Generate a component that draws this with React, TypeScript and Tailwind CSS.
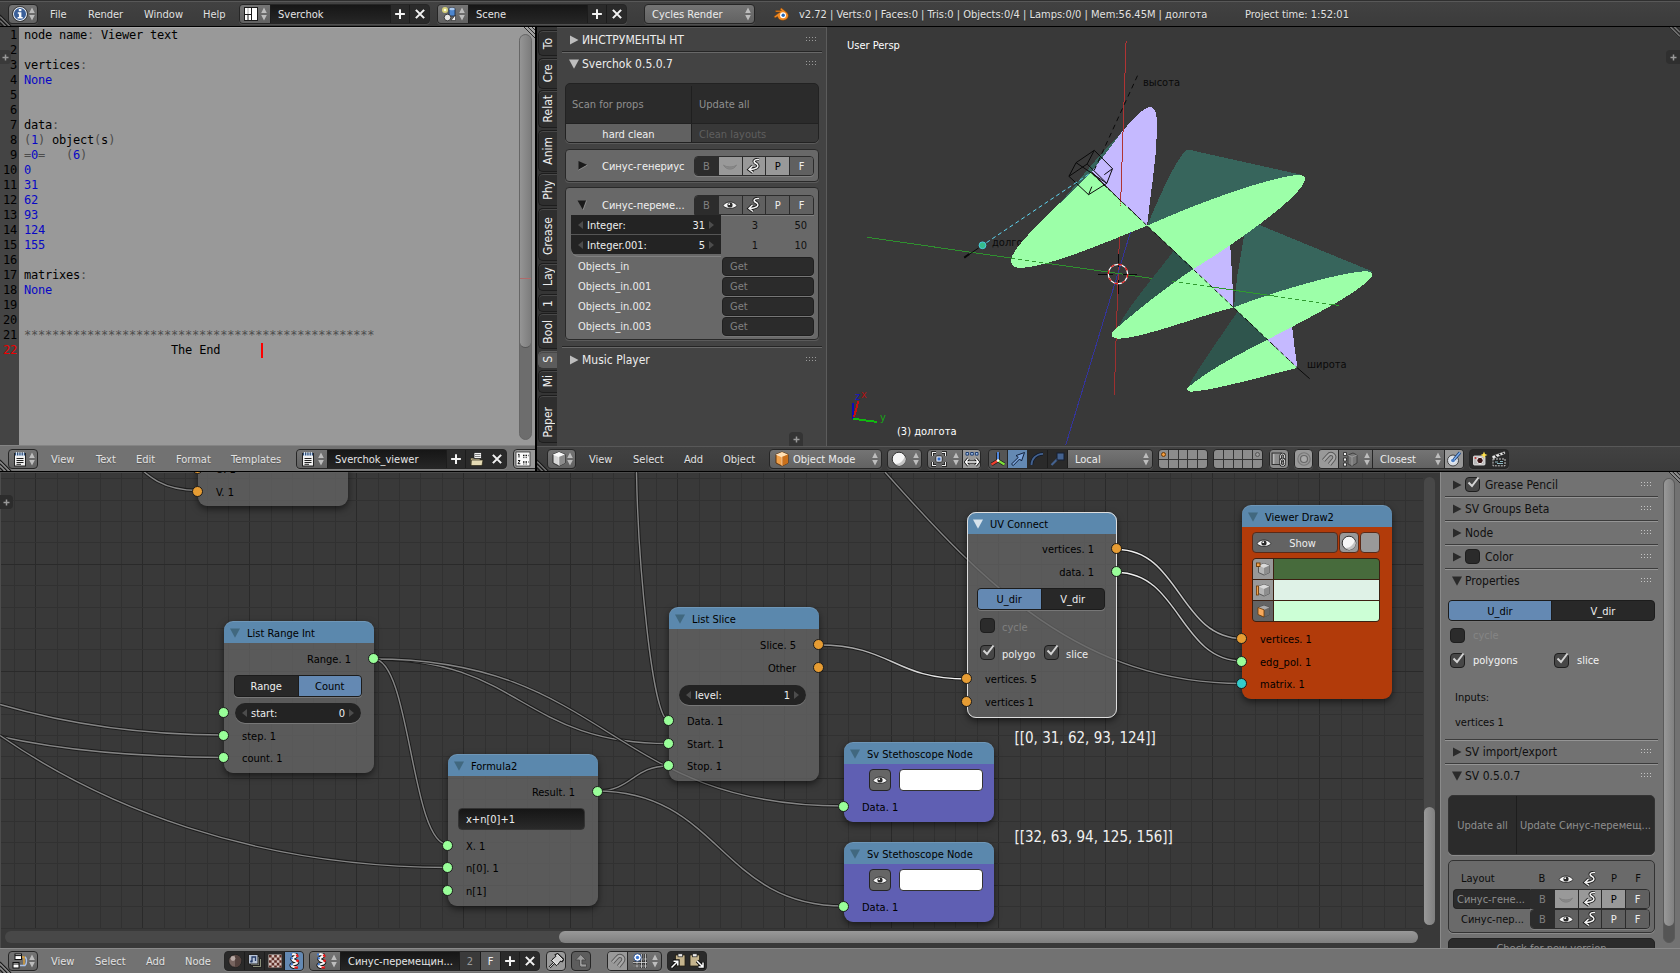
import React from "react";

type Kids = { children?: React.ReactNode };

/* ---------- icons ---------- */

const Svg = ({ children, s = 16, className = "" }: Kids & { s?: number; className?: string }) => (
  <svg width={s} height={s} viewBox="0 0 16 16" className={"shrink-0 " + className} fill="none">
    {children}
  </svg>
);

const UpDown = ({ className = "" }: { className?: string }) => (
  <svg width="6" height="14" viewBox="0 0 6 14" className={"shrink-0 " + className} fill="#bdbdbd">
    <path d="M3 0.5 5.8 6H0.2Z M0.2 8H5.8L3 13.5Z" />
  </svg>
);

const InfoIcon = () => (
  <Svg>
    <circle cx="8" cy="8" r="6.6" fill="#3a5f99" stroke="#e6ebf2" strokeWidth="1.1" />
    <circle cx="8" cy="8" r="7.5" stroke="#1c1c1c" strokeWidth="0.7" />
    <rect x="6.8" y="3" width="2.6" height="2.2" fill="#fff" />
    <path d="M5.8 6.3h3.6v4.8h1.3v1.5H5.6v-1.500h1.300V7.800H5.800Z" fill="#fff" />
  </Svg>
);
const LayoutIcon = () => (
  <Svg>
    <rect x="1.5" y="1.5" width="13" height="13" fill="#fff" stroke="#1c1c1c" />
    <path d="M8.5 2v12M2 8.5h6M5 9v5" stroke="#1c1c1c" />
    <path d="M5 2v6" stroke="#aaa" />
  </Svg>
);
const SceneIcon = () => (
  <Svg>
    <rect x="8" y="2" width="6" height="8" rx="1" fill="#4c86cf" stroke="#16233a" strokeWidth="0.8" />
    <ellipse cx="11" cy="3" rx="2.8" ry="1.2" fill="#a9c8ef" />
    <circle cx="4" cy="4" r="3" fill="#e7e27a" opacity="0.85" />
    <circle cx="4" cy="4" r="1.3" fill="#fffde0" />
    <circle cx="6.5" cy="11.5" r="3.3" fill="#e6e6e6" stroke="#222" strokeWidth="0.8" />
    <path d="M10 14.5 14.5 9v5.5Z" fill="#f3f3f3" stroke="#222" strokeWidth="0.6" />
  </Svg>
);
const BlenderIcon = () => (
  <Svg>
    <path
      d="M1 10.6 7 6H2.6V4.6H8.4L7 3.2 8.3 2 14 6.6A5 5 0 0 1 15.4 9.6 5.6 4.9 0 0 1 4.4 10.6L2 12Z"
      fill="#f08a24"
      stroke="#7a3c05"
      strokeWidth="0.5"
    />
    <circle cx="10" cy="9.2" r="3" fill="#fff" />
    <circle cx="10.2" cy="9.2" r="1.7" fill="#2767b5" />
  </Svg>
);
const TextFileIcon = () => (
  <Svg>
    <rect x="2.5" y="2.5" width="11" height="12.5" fill="#f1f1f1" stroke="#222" />
    <path d="M3 3.2h10" stroke="#31507c" strokeWidth="2.6" />
    <path d="M4.5 1v4M6.8 1v4M9.1 1v4M11.4 1v4" stroke="#cfe0f3" strokeWidth="1" />
    <path d="M4.5 7.5h7M4.5 9.5h7M4.5 11.5h7M4.5 13.3h4.5" stroke="#222" />
  </Svg>
);
const PlusIcon = () => (
  <Svg s={12}>
    <path d="M8 1.500v13M1.500 8h13" stroke="#f2f2f2" strokeWidth="2.6" />
  </Svg>
);
const CrossIcon = () => (
  <Svg s={12}>
    <path d="M2.500 2.500l11 11M13.500 2.500l-11 11" stroke="#f2f2f2" strokeWidth="2.8" />
  </Svg>
);
const FolderIcon = () => (
  <Svg>
    <path d="M1.5 7h9l3 7h-12Z" fill="#c9bc92" stroke="#2a2618" strokeWidth="0.7" />
    <rect x="5" y="1.5" width="7.5" height="6" fill="#f4f4f4" stroke="#222" strokeWidth="0.8" />
    <path d="M6 3.5h5.5M6 5.5h5.5" stroke="#666" strokeWidth="0.8" />
    <path d="M2.5 9h11.5l-1 5.5H2Z" fill="#e5dbb4" stroke="#2a2618" strokeWidth="0.7" />
  </Svg>
);
const LineNumIcon = () => (
  <Svg>
    <rect x="1" y="1" width="14" height="14" fill="#fafafa" stroke="#333" strokeWidth="0.8" />
    <path d="M4 3v3.500M3 9.500h2l-2 3.200h2.300M3.200 3.600l.8-.6" stroke="#111" strokeWidth="1" />
    <path d="M8 4.500h5.500M8 11h5.500" stroke="#111" strokeWidth="1.6" strokeDasharray="1.5 1" />
    <path d="M8 6.600h4M8 13h4" stroke="#555" strokeDasharray="1.5 1" />
  </Svg>
);
const Cube = ({ face = "#d6d6d6", top = "#fafafa", side = "#8c8c8c", stroke = "#222" }) => (
  <Svg>
    <path d="M8 1 14 3.4V12L8 15 2 12V3.4Z" fill={face} stroke={stroke} strokeWidth="0.9" />
    <path d="M8 1 14 3.4 8 6 2 3.4Z" fill={top} />
    <path d="M8 6 14 3.4V12L8 15Z" fill={side} />
    <path d="M2 3.4 8 6v9" stroke="#fff" strokeWidth="0.6" opacity="0.7" />
  </Svg>
);
const Sphere = ({ s = 16 }) => (
  <Svg s={s}>
    <circle cx="8" cy="8" r="6.8" fill="#f6f6f6" stroke="#222" strokeWidth="0.9" />
    <path d="M13.8 5A6.4 6.4 0 0 1 4 13C9 13.2 12.600 9.600 13.800 5Z" fill="#c4c4c4" />
  </Svg>
);
const PivotIcon = () => (
  <Svg>
    <path d="M1.5 5V1.5H5M11 1.5h3.500V5M14.500 11v3.500H11M5 14.500H1.500V11" stroke="#111" strokeWidth="2.6" />
    <path d="M1.500 5V1.500H5M11 1.500h3.500V5M14.500 11v3.500H11M5 14.500H1.500V11" stroke="#eee" strokeWidth="1.1" />
    <circle cx="8" cy="8" r="3.8" stroke="#333" strokeWidth="0.8" />
    <rect x="6" y="6" width="4" height="4" fill="#2f68c4" stroke="#e8eefb" strokeWidth="1" />
  </Svg>
);
const ManipIcon = () => (
  <Svg>
    <path d="M2 1.500h2.600v2.600H2ZM6.700 1.500h2.600v2.600H6.700ZM11.400 1.500H14v2.600h-2.600Z" fill="#a9c6ef" stroke="#1d3c70" strokeWidth="1" />
    <path d="M4.500 7.500 1.500 11l3 3.500M11.500 7.500l3 3.500-3 3.500M2 11h12" stroke="#111" strokeWidth="3" />
    <path d="M4.500 7.500 1.500 11l3 3.500M11.500 7.500l3 3.500-3 3.500M2 11h12" stroke="#fff" strokeWidth="1.300" />
  </Svg>
);
const AxesIcon = () => (
  <Svg>
    <path d="M8 9.500V1.500M8 9.500 1.500 13.500M8 9.500l6.500 4" stroke="#1a1a1a" strokeWidth="3.600" />
    <path d="M8 9.500V1" stroke="#4f86dd" strokeWidth="2" />
    <path d="M8 9.500 1.500 13.500" stroke="#f0402e" strokeWidth="2.200" />
    <path d="M8 9.500l6.500 4" stroke="#7fe03a" strokeWidth="2.200" />
    <circle cx="8" cy="9.500" r="1.300" fill="#fff" />
  </Svg>
);
const ArrowIcon = () => (
  <Svg>
    <path d="M1.500 13 8.300 6.400 6 4.600 14.500 1.500l-3 8.500L9.600 8 3.200 14.600Z" fill="#7ea6dc" stroke="#0f1f3a" strokeWidth="1" />
  </Svg>
);
const ArcIcon = () => (
  <Svg>
    <path d="M2.500 14C2.500 8 7 3 14 2.800" stroke="#0f1a2c" strokeWidth="3.200" />
    <path d="M2.500 14C2.500 8 7 3 14 2.800" stroke="#44628f" strokeWidth="1.800" />
  </Svg>
);
const ScaleIcon = () => (
  <Svg>
    <path d="M1.500 14 8 7.500" stroke="#44628f" strokeWidth="2.200" />
    <rect x="7" y="2" width="7" height="7" fill="#44628f" stroke="#141f33" />
  </Svg>
);
const LockIcon = () => (
  <Svg>
    <rect x="1" y="2" width="9.500" height="11.500" fill="#8d8d8d" stroke="#2a2a2a" strokeWidth="0.9" />
    <path d="M2.800 13v-10" stroke="#ddd" strokeWidth="0.8" />
    <rect x="9.6" y="3" width="4" height="6.600" rx="2" stroke="#222" strokeWidth="2.4" />
    <rect x="9.6" y="3" width="4" height="6.600" rx="2" stroke="#ddd" strokeWidth="1" />
    <rect x="9.6" y="8" width="4" height="6.600" rx="2" stroke="#222" strokeWidth="2.4" />
    <rect x="9.6" y="8" width="4" height="6.600" rx="2" stroke="#ddd" strokeWidth="1" />
  </Svg>
);
const PropIcon = () => (
  <Svg>
    <circle cx="8" cy="8" r="6.200" stroke="#777" strokeWidth="1.1" />
    <circle cx="8" cy="8" r="3.500" fill="#aaa" stroke="#666" strokeWidth="1.2" />
  </Svg>
);
const MagnetIcon = () => (
  <Svg>
    <path d="M2.500 9.500 7 4.500C10 1 15.500 4.500 12.500 8.500L8.500 13.500" stroke="#555" strokeWidth="4" />
    <path d="M2.500 9.500 7 4.500C10 1 15.500 4.500 12.500 8.500L8.500 13.500" stroke="#a8a8a8" strokeWidth="2.200" />
  </Svg>
);
const SnapVertIcon = () => (
  <Svg>
    <path d="M6 4 11 2l4 2v8l-5 3-4-2Z" fill="#777" stroke="#333" strokeWidth="0.8" />
    <path d="M6 4l4 2v9M10 6l5-2" stroke="#aaa" strokeWidth="0.7" />
    <path d="M1.500 1.500h3v3h-3ZM1.500 7h3v3h-3ZM1.500 12h3v3h-3Z" fill="#eee" stroke="#222" strokeWidth="0.8" />
  </Svg>
);
const SnapSelfIcon = () => (
  <Svg>
    <circle cx="7" cy="9.500" r="5.500" fill="#d8dde4" stroke="#333" strokeWidth="0.9" />
    <circle cx="7" cy="9.500" r="2.400" fill="#4d80c6" stroke="#fff" strokeWidth="0.9" />
    <path d="M8 8.500 14 1.500" stroke="#1b3d73" strokeWidth="3" />
    <path d="M8 8.500 14 1.500" stroke="#7fb0ee" strokeWidth="1.400" />
  </Svg>
);
const CameraIcon = () => (
  <Svg>
    <rect x="1.500" y="5" width="11.500" height="9" rx="1" fill="#b9b9b9" stroke="#eee" strokeWidth="0.8" />
    <circle cx="8" cy="9.500" r="3.200" fill="#3b1717" stroke="#fff" strokeWidth="0.9" />
    <circle cx="3.500" cy="7" r="0.9" fill="#c33" />
    <path d="M12 .5l1 2.500 2.500 1L13 5l-1 2.500L11 5 8.500 4 11 3Z" fill="#ffe14a" />
  </Svg>
);
const ClapIcon = () => (
  <Svg>
    <path d="M2 7.500 14 2.500 13.400.8 1.400 5.200Z" fill="#eee" stroke="#ddd" strokeWidth="0.5" />
    <path d="M4 4.400 5.800 6M8 3 9.600 4.400M11.500 1.800 12.800 3" stroke="#111" strokeWidth="1.2" />
    <rect x="2" y="8" width="12" height="6.800" fill="#222" stroke="#ddd" strokeWidth="0.9" strokeDasharray="2 1" />
    <path d="M4 11h3M6 12.500h6M9 10.500h3" stroke="#9ccbd6" strokeWidth="0.9" />
  </Svg>
);
const NodeTreeIcon = () => (
  <Svg>
    <path d="M7 4h5v9M4 9v3" stroke="#e0a43a" strokeWidth="1.4" />
    <path d="M13 4c2 1 2 7 0 8.500H8" stroke="#a9c0e6" strokeWidth="1.4" />
    <rect x="3" y="1" width="6.500" height="5.500" fill="#fff" stroke="#111" />
    <rect x="1" y="9.500" width="6" height="5.500" fill="#fff" stroke="#111" />
    <path d="M3 2.600h6.500M1 11h6" stroke="#111" />
  </Svg>
);
const MaterialIcon = () => (
  <Svg>
    <circle cx="8" cy="8" r="6.300" fill="#77645f" stroke="#191919" strokeWidth="0.8" />
    <path d="M8 1.800A6.200 6.200 0 0 1 8 14.200Z" fill="#54423e" />
    <circle cx="6" cy="5.500" r="2.400" fill="#b9aaa6" />
  </Svg>
);
const CompositIcon = () => (
  <Svg>
    <rect x="5.500" y="5.500" width="9" height="9" fill="#8b8f7a" stroke="#222" />
    <rect x="3.500" y="3.500" width="9" height="9" fill="#9da18e" stroke="#222" />
    <rect x="1.500" y="1.500" width="9.500" height="9.500" fill="#b7c3d6" stroke="#222" />
    <path d="M5 8.500V4h3.500v4" stroke="#243a66" strokeWidth="1.3" />
    <circle cx="4.400" cy="8.400" r="1.2" fill="#243a66" />
  </Svg>
);
const CheckerIcon = () => (
  <Svg>
    <rect x="1.500" y="1.500" width="13" height="13" fill="#d8c6c0" />
    <path
      d="M2 2h2.6v2.6H2ZM7.2 2h2.6v2.6H7.2ZM4.6 4.6h2.6v2.6H4.6ZM9.8 4.6h2.6v2.6H9.8ZM2 7.2h2.6v2.6H2ZM7.2 7.2h2.6v2.6H7.2ZM4.6 9.8h2.6v2.6H4.6ZM9.8 9.8h2.6v2.6H9.8ZM12.4 7.2H14.5v2.6h-2.1ZM12.4 2h2.1v2.6h-2.1ZM2 12.4h2.6v2.1H2ZM7.2 12.4h2.6v2.1H7.2ZM12.4 12.4h2.1v2.1h-2.1Z"
      fill="#5e2c25"
    />
  </Svg>
);
const SverchokIcon = () => (
  <Svg>
    <path d="M5.500 1.500C9 .5 11.500 2 9.500 3.500S5 5.500 7 7s5 1.500 4 3-6 1-5.500 2.500S9 14.500 11 14" stroke="#111" strokeWidth="4" />
    <path d="M5.500 1.500C9 .5 11.500 2 9.500 3.500S5 5.500 7 7s5 1.500 4 3-6 1-5.500 2.500S9 14.500 11 14" stroke="#f4f4f4" strokeWidth="2.200" />
    <path d="M10.500 1.500 12 4M10.500 7l2 1.500M8.500 14.500h3.500" stroke="#f01818" strokeWidth="2.200" />
    <path d="M5 4.500 6.500 6M5 10.500l1.500 1.500M4 1.500h2" stroke="#3f7bd8" strokeWidth="1.900" />
  </Svg>
);
const PinIcon = () => (
  <Svg>
    <path d="M1.500 14.500 6 10M3.500 6.500l6 6M5 7l4-3.500L8 2l1.500-.8L15 6.500 14 8l-1.800-.8L9 11.200Z" stroke="#222" strokeWidth="2.400" />
    <path d="M1.500 14.500 6 10M3.500 6.500l6 6M5 7l4-3.500L8.500 2l1-.5L14.500 6.500l-.8 1-1.500-.5L9 11.200Z" fill="#d0d0d0" stroke="#efefef" strokeWidth="0.900" />
  </Svg>
);
const ParentIcon = () => (
  <Svg>
    <path d="M13.500 14H8.500Q6.500 14 6.500 12V7H2.500L7.700 1.500 13 7H9v4h4.500Z" fill="#9b9b9b" stroke="#484848" strokeWidth="0.900" />
  </Svg>
);
const SnapGridIcon = () => (
  <Svg>
    <path d="M5 1v14M9.500 1v14M13.500 1v14M1 6h14M1 9.500h14M1 13h14" stroke="#222" strokeWidth="2.200" />
    <path d="M5 1v14M9.500 1v14M13.500 1v14M1 6h14M1 9.500h14M1 13h14" stroke="#ddd" strokeWidth="0.800" />
    <circle cx="5.500" cy="4.500" r="3.800" fill="#fff" stroke="#2b4f8a" />
    <circle cx="5.500" cy="4.500" r="1.700" fill="#3c77d6" />
  </Svg>
);
const PasteIcon = ({ out = false }) => (
  <Svg>
    <rect x={out ? 1 : 5.5} y="2" width="9.500" height="11" fill="#c5b48d" stroke="#241f12" strokeWidth="0.800" />
    <rect x={out ? 3.5 : 8} y="0.800" width="4.500" height="3" fill="#eee" stroke="#222" strokeWidth="0.700" />
    <path d={out ? "M8 8l5.500 5.500M14 9v5H9" : "M1.500 14.500 7.500 8.500M3 8h5v5"} stroke="#111" strokeWidth="3.400" />
    <path d={out ? "M8 8l5.500 5.500M14 9.500v4.500H9.500" : "M1.500 14.500 7.500 8.500M3.500 8.200h4.300v4.300"} stroke="#fff" strokeWidth="1.500" />
  </Svg>
);
const EyeIcon = () => (
  <Svg>
    <path d="M1 8.500C4 3.800 12 3.800 15 8.500 12 12.500 4 12.500 1 8.500Z" fill="#f6f6f6" stroke="#222" strokeWidth="0.800" />
    <circle cx="8" cy="8" r="2.600" fill="#2a2a2a" />
    <circle cx="7.200" cy="7.200" r="0.900" fill="#fff" />
  </Svg>
);
const ClosedEyeIcon = () => (
  <Svg>
    <path d="M1.500 7C4 12.500 12 12.500 14.500 7 12 9.500 4 9.500 1.500 7Z" fill="#8a8a8a" stroke="#7b7b7b" strokeWidth="0.800" />
  </Svg>
);
const CurveArrowIcon = () => (
  <Svg>
    <path d="M13 1.500C7.500 1 7 4 10 5.500S13.500 11 3.500 11.500M6.500 8 3 11.500 7 14.500" stroke="#1c1c1c" strokeWidth="3.200" />
    <path d="M13 1.500C7.500 1 7 4 10 5.500S13.500 11 3.500 11.500M6.500 8 3 11.500 7 14.500" stroke="#f2f2f2" strokeWidth="1.500" />
  </Svg>
);
const DrawCube = ({ kind }: { kind: "v" | "e" | "f" }) => (
  <Svg>
    <path d="M9 2.500 14.500 4.500V11.500L9 14 3.500 11.500V4.500Z" fill={kind === "f" ? "#888" : "#b5b5b5"} stroke="#444" strokeWidth="0.800" />
    <path d="M9 2.500 14.500 4.500 9 7 3.500 4.500Z" fill={kind === "f" ? "#aaa" : "#dadada"} />
    <path d="M9 7l5.500-2.500v7L9 14Z" fill={kind === "f" ? "#666" : "#8d8d8d"} />
    {kind === "v" && <rect x="1.500" y="2" width="3.500" height="3.500" fill="#f0a04a" stroke="#6b3905" strokeWidth="0.900" />}
    {kind === "e" && <rect x="1.500" y="4" width="2" height="9" fill="#f0a04a" stroke="#6b3905" strokeWidth="0.800" />}
    {kind === "f" && <path d="M3 4.500 9 6.800V14L3 11.500Z" fill="#f7a95c" stroke="#6b3905" strokeWidth="0.800" />}
  </Svg>
);
const Grip = ({ className }: { className: string }) => (
  <svg width="12" height="12" viewBox="0 0 12 12" className={"pointer-events-none absolute " + className}>
    <path d="M0 1 11 12M0 5 7 12M0 9 3 12" stroke="#1a1a1a" strokeWidth="1.200" />
    <path d="M0 2.500 9.500 12M0 6.500 5.500 12" stroke="#9a9a9a" strokeWidth="1" />
  </svg>
);
const GripTR = () => (
  <svg width="12" height="12" viewBox="0 0 12 12" className="pointer-events-none absolute right-0 top-0">
    <path d="M1 0 12 11M5 0l7 7M9 0l3 3" stroke="#2a2a2a" strokeWidth="1" />
    <path d="M2.500 0 12 9.500M6.500 0 12 5.500" stroke="#aaa" strokeWidth="0.900" />
  </svg>
);

/* ---------- header widgets ---------- */

const box = "flex h-[20px] shrink-0 items-center border border-[#262626] shadow-[0_1px_0_rgba(255,255,255,0.1)] ";
const grad = "bg-gradient-to-b from-[#747474] to-[#626262] ";

const EditorType = ({ children, className = "w-[30px]" }: Kids & { className?: string }) => (
  <div className={box + grad + "justify-between rounded-[4px] pl-[3px] pr-[2px] " + className}>
    {children}
    <UpDown />
  </div>
);

const Menu = ({ children, className }: Kids & { className: string }) => (
  <span className={"shrink-0 whitespace-nowrap pt-[2px] text-[#e2e2e2] [text-shadow:0_1px_1px_rgba(0,0,0,0.25)] " + className}>{children}</span>
);

const IconCell = ({ children, className = "" }: Kids & { className?: string }) => (
  <div className={"flex h-full shrink-0 items-center justify-center " + className}>{children}</div>
);

const DataBlock = ({ icon, name, className, children }: Kids & { icon: React.ReactNode; name: string; className: string }) => (
  <div className={box + "overflow-hidden rounded-[4px] bg-[#2a2a2a] " + className}>
    <div className={"flex h-full w-[30px] shrink-0 items-center justify-between pl-[3px] pr-[3px] " + grad}>
      {icon}
      <UpDown />
    </div>
    <div className="flex h-full min-w-0 flex-1 items-center border-x border-[#1c1c1c] bg-gradient-to-b from-[#161616] to-[#262626] pl-[7px] pt-[2px] whitespace-nowrap text-[#e6e6e6]">
      {name}
    </div>
    {children}
  </div>
);

const Plus = () => (
  <IconCell className="w-[19px] border-r border-[#1c1c1c]">
    <PlusIcon />
  </IconCell>
);
const Close = () => (
  <IconCell className="w-[19px]">
    <CrossIcon />
  </IconCell>
);

const TopHeader = () => (
  <header className="relative flex h-[27px] w-full shrink-0 items-center border-b border-black bg-gradient-to-b from-[#424242] to-[#3b3b3b] pl-[8px] pt-[2px] shadow-[inset_0_1px_0_#2f2f2f,inset_0_2px_0_#585858]">
    <Grip className="bottom-0 left-0" />
    <EditorType>
      <InfoIcon />
    </EditorType>
    <Menu className="ml-[12px] w-[38px]">File</Menu>
    <Menu className="w-[56px]">Render</Menu>
    <Menu className="w-[59px]">Window</Menu>
    <Menu className="w-[36px]">Help</Menu>
    <DataBlock icon={<LayoutIcon />} name="Sverchok" className="w-[191px]">
      <Plus />
      <Close />
    </DataBlock>
    <DataBlock icon={<SceneIcon />} name="Scene" className="ml-[7px] w-[190px]">
      <Plus />
      <Close />
    </DataBlock>
    <div className={box + grad + "ml-[17px] w-[111px] justify-between rounded-[4px] pl-[7px] pr-[3px] text-[#ececec]"}>
      <span className="pt-[2px]">Cycles Render</span>
      <UpDown />
    </div>
    <span className="ml-[18px]">
      <BlenderIcon />
    </span>
    <Menu className="ml-[10px] w-[446px]">
      v2.72 | Verts:0 | Faces:0 | Tris:0 | Objects:0/4 | Lamps:0/0 | Mem:56.45M | долгота
    </Menu>
    <Menu className="">Project time: 1:52:01</Menu>
  </header>
);

/* ---------- text editor ---------- */

const K = ({ children }: Kids) => <span className="text-[#4c4c4c]">{children}</span>;
const N = ({ children }: Kids) => <span className="text-[#0808c4]">{children}</span>;

const LINES: React.ReactNode[] = [
  <>node name<K>:</K> Viewer text</>,
  "",
  <>vertices<K>:</K></>,
  <N>None</N>,
  "",
  "",
  <>data<K>:</K></>,
  <><K>(</K><N>1</N><K>)</K> object<K>(</K>s<K>)</K></>,
  <><K>=</K><N>0</N><K>=</K>{"   "}<K>(</K><N>6</N><K>)</K></>,
  <N>0</N>,
  <N>31</N>,
  <N>62</N>,
  <N>93</N>,
  <N>124</N>,
  <N>155</N>,
  "",
  <>matrixes<K>:</K></>,
  <N>None</N>,
  "",
  "",
  <K>{"*".repeat(50)}</K>,
  <>{" ".repeat(21)}The End{" ".repeat(6)}<i className="ml-[-1px] inline-block h-[15px] w-[2px] bg-[#f00] align-top" /></>,
];

const TextEditor = () => (
  <section className="relative flex w-[537px] shrink-0 flex-col border-r-2 border-black">
    <div className="relative flex h-[418px] bg-[#999] shadow-[inset_0_1px_0_#aaa]">
      <div className="w-[19px] shrink-0 bg-[#444] pt-[1px] pr-[2px] text-right font-['DejaVu_Sans_Mono',monospace] text-[12px] leading-[15px] tracking-[-0.22px] text-black">
        {LINES.map((_, i) => (
          <div key={i} className={"flex h-[15px] justify-end " + (i === 21 ? "text-[#e00]" : "")}>{i + 1}</div>
        ))}
      </div>
      <div className="flex-1 pl-[5px] pt-[1px] font-['DejaVu_Sans_Mono',monospace] text-[12px] leading-[15px] tracking-[-0.22px] text-black">
        {LINES.map((l, i) => (
          <div key={i} className="h-[15px] whitespace-pre">{l}</div>
        ))}
      </div>
      <div className="mr-[3px] mt-[7px] h-[406px] w-[13px] shrink-0 rounded-full border border-[#666] bg-[#6d6d6d]">
        <div className="flex h-[313px] flex-col rounded-full border-b border-[#555] bg-gradient-to-r from-[#959595] to-[#7c7c7c]">
          <div className="mt-[243px] h-[1px] bg-[#b06a6a]" />
        </div>
      </div>
      <div className="absolute left-0 top-[23px] flex h-[14px] w-[11px] items-center justify-center rounded-r-[4px] bg-[#3a3a3a]">
        <PlusTiny />
      </div>
      <GripTR />
    </div>
    <div className="relative flex h-[27px] items-center overflow-hidden border-b border-black bg-[#727272] pl-[8px] pt-[2px] shadow-[inset_0_1px_0_#848484]">
      <Grip className="bottom-0 left-0" />
      <EditorType>
        <TextFileIcon />
      </EditorType>
      <Menu className="ml-[13px] w-[45px]">View</Menu>
      <Menu className="w-[40px]">Text</Menu>
      <Menu className="w-[40px]">Edit</Menu>
      <Menu className="w-[55px]">Format</Menu>
      <Menu className="w-[65px]">Templates</Menu>
      <DataBlock icon={<TextFileIcon />} name="Sverchok_viewer" className="w-[211px]">
        <Plus />
        <IconCell className="w-[21px]">
          <FolderIcon />
        </IconCell>
        <Close />
      </DataBlock>
      <div className={box + "ml-[6px] w-[40px] gap-[5px] rounded-[4px] bg-[#999] pl-[1px]"}>
        <LineNumIcon />
        <LineNumIcon />
      </div>
    </div>
  </section>
);

const PlusTiny = () => (
  <svg width="7" height="7" viewBox="0 0 7 7">
    <path d="M3.500 0.500v6M0.500 3.500h6" stroke="#999" strokeWidth="1.500" />
  </svg>
);

/* ---------- tool shelf ---------- */

const Tab = ({ children, className }: Kids & { className: string }) => (
  <div
    className={
      "flex w-[19px] shrink-0 items-center justify-center rounded-l-[5px] border border-r-0 border-[#1d1d1d] text-[#ececec] shadow-[inset_0_1px_0_#484848] " +
      className
    }
  >
    <span className="rotate-180 text-[12px] leading-[14px] whitespace-nowrap [writing-mode:vertical-rl]">{children}</span>
  </div>
);

const Dots = ({ className = "text-[#9a9a9a]" }) => (
  <svg width="11" height="5" viewBox="0 0 11 5" className={"shrink-0 " + className} fill="currentColor" shapeRendering="crispEdges">
    {[0, 3, 6, 9].map((x) => (
      <g key={x}>
        <rect x={x} y="0" width="1" height="1" />
        <rect x={x} y="3" width="1" height="1" />
      </g>
    ))}
  </svg>
);

const Tri = ({ open = false, className = "text-[#bdbdbd]" }) => (
  <svg width="10" height="10" viewBox="0 0 10 10" className={"shrink-0 " + className} fill="currentColor">
    <path d={open ? "M0 0.500H10L5 9.800Z" : "M1 0.500V9.500L9.500 5Z"} />
  </svg>
);

const ShelfTitle = ({ children, open, className = "" }: Kids & { open?: boolean; className?: string }) => (
  <div className={"flex h-[23px] items-center pr-[5px] pl-[7px] " + className}>
    <Tri open={open} />
    <span className="ml-[3px] flex-1 text-[12px] whitespace-nowrap text-[#ededed]">{children}</span>
    <Dots />
  </div>
);

const Rule = ({ className = "bg-[#252525] shadow-[0_1px_0_#686868]" }) => <div className={"h-[1px] shrink-0 " + className} />;

const Flags = ({ off, className = "" }: { off: boolean; className?: string }) => {
  const on = off ? "bg-[#999] text-black" : "bg-[#606060] text-[#eee]";
  const cell = "flex flex-1 items-center justify-center border-r border-[#2c2c2c] ";
  return (
    <div className={"flex h-[20px] shrink-0 overflow-hidden rounded-[4px] border border-[#2c2c2c] shadow-[0_1px_0_#808080] " + className}>
      <div className={cell + "bg-[#2c2c2c] pt-[2px] text-[#808080]"}>B</div>
      <div className={cell + on}>{off ? <ClosedEyeIcon /> : <EyeIcon />}</div>
      <div className={cell + on}>
        <CurveArrowIcon />
      </div>
      <div className={cell + "pt-[2px] " + on}>P</div>
      <div className="flex flex-1 items-center justify-center bg-[#606060] pt-[2px] text-[#eee]">F</div>
    </div>
  );
};

const IntField = ({ label, value, className = "" }: { label: string; value: string; className?: string }) => (
  <div className={"flex items-center justify-between bg-[#232323] px-[7px] text-[#eee] " + className}>
    <span className="flex items-center gap-[4px]">
      <svg width="5" height="8" viewBox="0 0 5 8" fill="#4c4c4c"><path d="M5 0v8L0 4Z" /></svg>
      <span className="pt-[2px]">{label}</span>
    </span>
    <span className="flex items-center gap-[4px]">
      <span className="pt-[2px]">{value}</span>
      <svg width="5" height="8" viewBox="0 0 5 8" fill="#4c4c4c"><path d="M0 0v8l5-4Z" /></svg>
    </span>
  </div>
);

const DarkTri = ({ open = false }) => (
  <svg width="10" height="11" viewBox="0 0 10 11" className="shrink-0">
    <path d={open ? "M0.500 0.500H9.500L6 10Z" : "M0.500 1V10L9.500 5Z"} fill="#1a1a1a" />
    <path d={open ? "M9.500 0.500 6 10" : "M0.500 10 9.500 5"} stroke="#aaa" strokeWidth="0.700" />
  </svg>
);

const ToolShelf = () => (
  <div className="flex h-full w-[290px] shrink-0 border-r border-[#5c5c5c] bg-[#434343] shadow-[inset_0_1px_0_#565656]">
    <div className="flex w-[20px] shrink-0 flex-col bg-[#353535] pl-[1px] pt-[3px]">
      <Tab className="mb-[2px] h-[26px] bg-[#2e2e2e] pt-[2px]">To</Tab>
      <Tab className="mb-[1px] h-[31px] bg-[#2e2e2e]">Cre</Tab>
      <Tab className="mb-[2px] h-[38px] bg-[#2e2e2e]">Relat</Tab>
      <Tab className="mb-[1px] h-[42px] bg-[#2e2e2e]">Anim</Tab>
      <Tab className="mb-[2px] h-[33px] bg-[#2e2e2e]">Phy</Tab>
      <Tab className="mb-[2px] h-[53px] bg-[#2e2e2e] pt-[4px]">Grease</Tab>
      <Tab className="mb-[3px] h-[28px] bg-[#2e2e2e]">Lay</Tab>
      <Tab className="mb-[1px] h-[18px] bg-[#2e2e2e]">1</Tab>
      <Tab className="mb-[2px] h-[36px] bg-[#2e2e2e] pt-[2px]">Bool</Tab>
      <Tab className="mb-[2px] h-[17px] border-[#5c5c5c] bg-[#5c5c5c]">S</Tab>
      <Tab className="mb-[2px] h-[23px] bg-[#2e2e2e]">Mi</Tab>
      <Tab className="h-[48px] bg-[#2e2e2e] pt-[7px]">Paper</Tab>
    </div>
    <div className="relative flex flex-1 flex-col pl-[5px] pr-[4px] pt-[1px]">
      <ShelfTitle>ИНСТРУМЕНТЫ НТ</ShelfTitle>
      <Rule />
      <ShelfTitle open>Sverchok 0.5.0.7</ShelfTitle>
      <div className="mt-[8px] ml-[3px] mr-[3px] flex h-[60px] flex-col overflow-hidden rounded-[5px] border border-[#222] bg-[#2b2b2b] shadow-[0_1px_0_#5a5a5a]">
        <div className="flex h-[40px] border-b border-[#222] pt-[2px] text-[#8f8f8f]">
          <div className="flex w-[126px] items-center border-r border-[#1f1f1f] pl-[6px]">Scan for props</div>
          <div className="flex items-center pl-[7px]">Update all</div>
        </div>
        <div className="flex flex-1">
          <div className="flex w-[126px] items-center justify-center border-r border-[#1f1f1f] bg-[#616161] pt-[3px] text-[#f0f0f0]">hard clean</div>
          <div className="flex flex-1 items-center bg-[#383838] pl-[7px] pt-[3px] text-[#5f5f5f]">Clean layouts</div>
        </div>
      </div>
      <div className="mt-[6px] ml-[3px] mr-[3px] flex h-[33px] items-center rounded-[4px] border border-[#292929] bg-[#686868] pl-[12px] shadow-[0_1px_0_#5a5a5a]">
        <DarkTri />
        <span className="ml-[14px] flex-1 pt-[2px] whitespace-nowrap text-[#f0f0f0]">Синус-генериус</span>
        <Flags off className="mr-[4px] w-[120px]" />
      </div>
      <div className="mt-[5px] ml-[3px] mr-[3px] flex h-[153px] flex-col rounded-[4px] border border-[#292929] bg-[#686868] pt-[7px] shadow-[0_1px_0_#5a5a5a]">
        <div className="flex items-center pl-[11px]">
          <DarkTri open />
          <span className="ml-[15px] flex-1 pt-[2px] whitespace-nowrap text-[#f0f0f0]">Синус-переме...</span>
          <Flags off={false} className="mr-[4px] w-[120px] rounded-b-none" />
        </div>
        <div className="flex pl-[5px] pr-[11px]">
          <div className="w-[150px] overflow-hidden rounded-bl-[8px] shadow-[0_1px_0_#808080]">
            <IntField label="Integer:" value="31" className="h-[19px]" />
            <IntField label="Integer.001:" value="5" className="h-[20px] border-t border-[#555]" />
          </div>
          <div className="grid flex-1 grid-cols-2 pt-[1px] text-right leading-[20px] text-[#111]">
            <span className="pr-[6px]">3</span>
            <span>50</span>
            <span className="pr-[6px]">1</span>
            <span>10</span>
          </div>
        </div>
        {["Objects_in", "Objects_in.001", "Objects_in.002", "Objects_in.003"].map((n) => (
          <div key={n} className="flex h-[20px] items-center pl-[12px] pr-[4px]">
            <span className="flex-1 pt-[2px] text-[#ececec]">{n}</span>
            <div className="flex h-[19px] w-[92px] items-center rounded-[4px] border border-[#202020] bg-[#2b2b2b] pl-[7px] pt-[2px] text-[#808080] shadow-[0_1px_0_#777]">
              Get
            </div>
          </div>
        ))}
      </div>
      <Rule className="mt-[6px] bg-[#252525] shadow-[0_1px_0_#686868]" />
      <ShelfTitle className="mt-[1px]">Music Player</ShelfTitle>
      <div className="absolute bottom-0 right-[23px] flex h-[14px] w-[14px] items-center justify-center rounded-t-[4px] bg-[#343434]">
        <PlusTiny />
      </div>
    </div>
  </div>
);

/* ---------- 3D viewport ---------- */

const Scene = () => (
  <svg width="853" height="419" viewBox="827 27 853 419" className="block bg-[#393939]">
    <text x="992" y="246" fontSize="11" fill="#0a0a0a">долгота</text>
    <g transform="translate(840 30) scale(0.35714 0.33333)" fill="none" shapeRendering="crispEdges">
      <g stroke="#9e3030">
        <path vectorEffect="non-scaling-stroke" d="M783 600 768 1094" />
      </g>
      <path vectorEffect="non-scaling-stroke" stroke="#34349a" d="M818 590 632 1245" />
      <path vectorEffect="non-scaling-stroke" stroke="#2f8f2f" d="M77 622 1396 826" />
      <path fill="#37655c" d="M793 302C740 360 690 420 655 470L560 590 702 432 780 330Z" />
      <path fill="#c5b9ff" d="M705 425 790 305C820 268 850 231 868 231 885 231 889 262 888 300 885 400 868 500 860 587Z" />
      <path fill="#37655c" d="M860 587C890 510 935 400 965 365Q970 358 985 361L1290 434 1040 540Z" />
      <path fill="#37655c" d="M1133 608 1170 583 1490 724 1280 800 1103 832 1112 740Z" />
      <path fill="#2f554d" d="M935 662 990 717 900 800 772 908C790 850 880 740 935 662Z" />
      <path fill="#2f554d" d="M1113 845 1199 930 1100 1000 973 1078C985 1040 1060 930 1113 845Z" />
      <path fill="#c5b9ff" d="M988 718 1092 642C1097 700 1100 770 1101 830Z" />
      <path fill="#c5b9ff" d="M1197 929 1266 888C1270 930 1276 980 1281 1014Z" />
      <path fill="#9cffa8" d="M702 428 860 587C760 630 600 705 515 713 482 716 478 705 480 685 490 640 600 540 702 428Z" />
      <path fill="#9cffa8" d="M860 587C1000 520 1180 450 1270 436 1300 431 1305 440 1300 455 1285 500 1150 610 990 717Z" />
      <path fill="#9cffa8" d="M990 717 1103 832C1000 860 860 920 785 926 760 928 758 915 763 905 800 870 900 780 990 717Z" />
      <path fill="#9cffa8" d="M1103 832C1200 790 1390 730 1465 724 1495 722 1493 735 1488 742 1450 790 1320 860 1197 929Z" />
      <path fill="#9cffa8" d="M1197 930 1281 1014C1180 1040 1050 1080 985 1085 970 1085 970 1078 975 1072 1020 1030 1100 980 1197 930Z" />
      <g stroke="#b03434">
        <path vectorEffect="non-scaling-stroke" d="M801 34 786 512" />
        <path vectorEffect="non-scaling-stroke" strokeDasharray="1 1" d="M786 512 785 532" />
      </g>
      <g stroke="#2f9a2f">
        <path vectorEffect="non-scaling-stroke" strokeDasharray="4 3" d="M480 685 600 703M930 754 1035 770M1215 798 1396 826" />
        <path vectorEffect="non-scaling-stroke" d="M1035 770 1215 798" />
      </g>
      <g stroke="#0a0a0a" shapeRendering="auto">
        <path vectorEffect="non-scaling-stroke" strokeDasharray="5 4" d="M833 137 707 432" />
        <path vectorEffect="non-scaling-stroke" strokeDasharray="4 3" d="M707 432 1281 1014" />
        <path vectorEffect="non-scaling-stroke" d="M1281 1014 1315 1046M348 683 388 654" />
        <path vectorEffect="non-scaling-stroke" strokeWidth="2" d="M348 683 362 672" />
        <path
          vectorEffect="non-scaling-stroke"
          d="M712 361 763 416 747 460 696 494 641 439 661 398ZM661 398 747 460M712 361 692 402 641 439M692 402 747 460M696 494 705 470M763 416 740 434"
        />
      </g>
      <path stroke="#0a0a0a" vectorEffect="non-scaling-stroke" d="M722 733H765M792 733H833M779 672V712M779 750V791" />
      <path vectorEffect="non-scaling-stroke" shapeRendering="auto" stroke="#5fd6f2" strokeDasharray="4 3" d="M410 638 700 430" />
      <path vectorEffect="non-scaling-stroke" stroke="#0b0bb8" strokeWidth="2" d="M37 1168V1120" />
      <path vectorEffect="non-scaling-stroke" stroke="#c80f0f" strokeWidth="2" d="M39 1162 51 1114" />
      <path vectorEffect="non-scaling-stroke" stroke="#10b810" strokeWidth="2" d="M37 1166 104 1176" />
    </g>
    <circle cx="1118" cy="274" r="9.700" fill="none" stroke="#fff" strokeWidth="1.200" />
    <circle cx="1118" cy="274" r="9.700" fill="none" stroke="#e01010" strokeWidth="1.200" strokeDasharray="3.800 3.800" />
    <circle cx="982.500" cy="245.300" r="3.400" fill="#36bd8c" stroke="#4cd0e6" strokeWidth="0.900" />
    <g fontSize="11">
      <text x="847" y="49" fill="#fff">User Persp</text>
      <text x="1143" y="86" fill="#0a0a0a">высота</text>
      <text x="1307" y="368" fill="#0a0a0a">широта</text>
      <text x="897" y="435" fill="#fff">(3) долгота</text>
      <text x="855" y="400" fill="#1414c8">z</text>
      <text x="861" y="398" fill="#b01212">x</text>
      <text x="880" y="421" fill="#15a815">y</text>
    </g>
  </svg>
);

const Layers = ({ className, first, last }: { className: string; first?: boolean; last?: boolean }) => (
  <div className={"grid h-[20px] w-[50px] shrink-0 grid-cols-5 grid-rows-2 gap-[1px] overflow-hidden rounded-[4px] border border-[#262626] bg-[#333] " + className}>
    {Array.from({ length: 10 }, (_, i) => (
      <span key={i} className="flex items-center justify-center bg-[#8c8c8c]">
        {first && i === 0 && <i className="h-[5px] w-[5px] rounded-full border border-[#6b3a08] bg-[#f29b3c]" />}
        {last && i === 4 && <i className="h-[5px] w-[5px] rounded-full border border-[#555] bg-[#999]" />}
      </span>
    ))}
  </div>
);

const Viewport = () => (
  <section className="relative flex h-full flex-1 flex-col">
    <div className="flex h-[419px]">
      <ToolShelf />
      <div className="relative">
        <Scene />
        <div className="absolute right-0 top-[23px] flex h-[14px] w-[14px] items-center justify-center rounded-l-[4px] bg-[#2f2f2f]">
          <PlusTiny />
        </div>
        <GripTR />
      </div>
    </div>
    <div className="relative flex h-[26px] items-center border-b border-black bg-gradient-to-b from-[#424242] to-[#3b3b3b] pl-[10px] pt-[1px] shadow-[inset_0_1px_0_#585858]">
      <Grip className="bottom-0 left-0" />
      <EditorType className="w-[29px]">
        <Cube />
      </EditorType>
      <Menu className="ml-[13px] w-[44px]">View</Menu>
      <Menu className="w-[51px]">Select</Menu>
      <Menu className="w-[39px]">Add</Menu>
      <Menu className="w-[46px]">Object</Menu>
      <div className={box + grad + "w-[113px] rounded-[4px] pl-[4px] pr-[3px] text-[#ececec]"}>
        <Cube face="#f0a04a" top="#ffe0b5" side="#c9701c" stroke="#5a2d05" />
        <span className="ml-[3px] flex-1 pt-[2px] whitespace-nowrap">Object Mode</span>
        <UpDown />
      </div>
      <EditorType className="ml-[5px] w-[35px]">
        <Sphere />
      </EditorType>
      <div className={box + grad + "ml-[5px] w-[54px] overflow-hidden rounded-[4px]"}>
        <div className="flex h-full w-[34px] items-center justify-between pl-[3px] pr-[3px]">
          <PivotIcon />
          <UpDown />
        </div>
        <IconCell className="flex-1 border-l border-[#262626] bg-[#999]">
          <ManipIcon />
        </IconCell>
      </div>
      <div className={box + "ml-[7px] w-[165px] overflow-hidden rounded-[4px] bg-[#2a2a2a] text-[#ececec]"}>
        <IconCell className="w-[18px] bg-[#555]">
          <AxesIcon />
        </IconCell>
        <IconCell className="w-[20px] border-l border-[#262626] bg-[#6489b3]">
          <ArrowIcon />
        </IconCell>
        <IconCell className="w-[20px]">
          <ArcIcon />
        </IconCell>
        <IconCell className="w-[20px] border-l border-[#1c1c1c]">
          <ScaleIcon />
        </IconCell>
        <div className={"flex h-full flex-1 items-center justify-between border-l border-[#1c1c1c] pl-[7px] pr-[3px] " + grad}>
          <span className="pt-[2px]">Local</span>
          <UpDown />
        </div>
      </div>
      <Layers first className="ml-[5px]" />
      <Layers last className="ml-[5px]" />
      <div className={box + "ml-[6px] w-[20px] justify-center rounded-[4px] bg-[#8c8c8c]"}>
        <LockIcon />
      </div>
      <div className={box + "ml-[5px] w-[19px] justify-center rounded-[4px] bg-[#999]"}>
        <PropIcon />
      </div>
      <div className={box + grad + "ml-[5px] w-[146px] overflow-hidden rounded-[4px] text-[#ececec]"}>
        <IconCell className="w-[19px] bg-[#999]">
          <MagnetIcon />
        </IconCell>
        <div className="flex h-full w-[34px] items-center justify-between border-l border-[#262626] pl-[3px] pr-[2px]">
          <SnapVertIcon />
          <UpDown />
        </div>
        <div className="flex h-full flex-1 items-center justify-between border-l border-[#262626] pl-[7px] pr-[3px]">
          <span className="pt-[2px]">Closest</span>
          <UpDown />
        </div>
        <IconCell className="w-[19px] border-l border-[#262626] bg-[#999]">
          <SnapSelfIcon />
        </IconCell>
      </div>
      <div className={box + "ml-[5px] w-[40px] justify-around rounded-[4px] bg-[#2a2a2a]"}>
        <CameraIcon />
        <ClapIcon />
      </div>
    </div>
  </section>
);

/* ---------- node editor ---------- */

const COLORS = { g: "bg-[#99ff99]", o: "bg-[#e69c33]", t: "bg-[#33cccc]" };

const Socket = ({ c, out = false }: { c: keyof typeof COLORS; out?: boolean }) => (
  <i
    className={
      "absolute top-1/2 h-[11px] w-[11px] -translate-y-[6px] rounded-full border border-[#1b1b1b] " +
      COLORS[c] +
      (out ? " right-[-5px]" : " left-[-6px]")
    }
  />
);

const Input = ({ children, c = "g" }: Kids & { c?: keyof typeof COLORS }) => (
  <div className="relative flex h-[22.500px] shrink-0 items-center pl-[18px] pt-[2px] whitespace-nowrap">
    <Socket c={c} />
    {children}
  </div>
);
const Output = ({ children, c = "g" }: Kids & { c?: keyof typeof COLORS }) => (
  <div className="relative flex h-[22.500px] shrink-0 items-center justify-end pr-[23px] pt-[2px] whitespace-nowrap">
    <Socket c={c} out />
    {children}
  </div>
);

const Node = ({ title, className, body = "bg-[#666666]/75", selected = false, children }: Kids & { title: string; className: string; body?: string; selected?: boolean }) => (
  <div
    className={
      "absolute flex w-[150px] flex-col rounded-[9px] text-black shadow-[0_3px_7px_rgba(0,0,0,0.55)] " +
      (selected ? "outline-[1.500px] outline-[#dedede] outline-offset-[-1px] " : "") +
      className
    }
  >
    <div className="flex h-[22px] shrink-0 items-center rounded-t-[9px] bg-[#5b88ad] pl-[6px] shadow-[inset_0_1px_0_rgba(255,255,255,0.12)]">
      <Tri open className={selected ? "mt-[2px] text-[#d7e3ec]" : "mt-[2px] text-[#41687f]"} />
      <span className="ml-[7px] pt-[3px] whitespace-nowrap">{title}</span>
    </div>
    <div className={"flex flex-1 flex-col rounded-b-[9px] " + body}>{children}</div>
  </div>
);

const Toggle = ({ a, b, on, className = "" }: { a: string; b: string; on: "a" | "b"; className?: string }) => (
  <div className={"flex shrink-0 overflow-hidden rounded-[4px] border border-[#1c1c1c] bg-[#282828] text-[#eee] shadow-[0_1px_0_#777] " + className}>
    <div className={"flex flex-1 items-center justify-center border-r border-[#1c1c1c] pt-[2px] " + (on === "a" ? "bg-[#6489b3] text-black" : "")}>{a}</div>
    <div className={"flex flex-1 items-center justify-center pt-[2px] " + (on === "b" ? "bg-[#6489b3] text-black" : "")}>{b}</div>
  </div>
);

const Check = ({ on = false }) => (
  <span className={"relative h-[15px] w-[15px] shrink-0 rounded-[4px] border border-[#1e1e1e] " + (on ? "bg-[#474747]" : "bg-[#2b2b2b]")}>
    {on && (
      <svg width="15" height="15" viewBox="0 0 15 15" className="absolute -top-[3px] left-0" fill="none">
        <path d="M2.500 7.500 6 11 12.500 2.500" stroke="#d4d4d4" strokeWidth="2" />
      </svg>
    )}
  </span>
);

const Stetho = ({ className }: { className: string }) => (
  <Node title="Sv Stethoscope Node" className={"h-[80px] " + className} body="bg-[#5f5fb3]">
    <div className="mt-[5px] flex pl-[25px]">
      <div className="flex h-[22px] w-[22px] items-center justify-center rounded-[4px] border border-[#252525] bg-[#666]">
        <EyeIcon />
      </div>
      <div className="ml-[8px] h-[22px] w-[84px] rounded-[4px] border border-[#333] bg-white" />
    </div>
    <div className="h-[5px]" />
    <Input>Data. 1</Input>
  </Node>
);

const link = (x1: number, y1: number, x2: number, y2: number) => {
  const h = (x2 - x1) / 2;
  return `M${x1} ${y1}C${x1 + h} ${y1} ${x2 - h} ${y2} ${x2} ${y2}`;
};

const LINKS: { d: string; s?: string }[] = [
  { d: "M120 450C146 474 158 490 198 490.500" },
  { d: "M636.500 472C638 560 652 719 668.500 720.500" },
  { d: "M0 704.500C60 722 130 735 223.500 735" },
  { d: "M0 736.500C65 751 140 757 223.500 757.500" },
  { d: "M0 735.500C100 805 250 867 448 867.500" },
  { d: link(373.5, 659, 668.5, 743.5) },
  { d: link(373.5, 659, 843.5, 806) },
  { d: link(373.5, 659, 448, 844.5) },
  { d: link(596.5, 791, 668.5, 766) },
  { d: link(596.5, 791, 843.5, 906) },
  { d: "M885 472C985 585 1082 683.500 1242.500 683.500" },
  { d: link(818.5, 645, 967, 679), s: "url(#toWhite)" },
  { d: link(1117, 549.5, 1242.5, 638.5), s: "url(#fromWhite)" },
  { d: link(1117, 572.5, 1242.5, 661), s: "url(#fromWhite)" },
];

const gridX = Array.from({ length: 68 }, (_, i) => ({ p: Math.round(36.3 - 21.4 + i * 21.4), major: (i - 1) % 5 === 0 }));
const gridY = Array.from({ length: 23 }, (_, i) => ({ p: Math.floor(564.3 - 4 * 21.4 + i * 21.4), major: (i - 4) % 5 === 0 }));

const Canvas = () => (
  <svg width="1440" height="476" viewBox="0 472 1440 476" className="block bg-[#393939]">
    <defs>
      <linearGradient id="toWhite">
        <stop offset="0" stopColor="#8c8c8c" />
        <stop offset="1" stopColor="#fff" />
      </linearGradient>
      <linearGradient id="fromWhite">
        <stop offset="0" stopColor="#fff" />
        <stop offset="1" stopColor="#8c8c8c" />
      </linearGradient>
    </defs>
    {gridX.map(({ p, major }) => p < 1424 && <rect key={p} x={p - 1} y="472" width="1" height="457" fill={major ? "#2a2a2a" : "#313131"} />)}
    {gridY.map(({ p, major }) => p < 930 && <rect key={p} x="0" y={p} width="1423" height="1" fill={major ? "#2a2a2a" : "#313131"} />)}
    <rect x="0" y="472" width="1440" height="1" fill="#4c4c4c" />
    <rect x="0" y="472" width="1" height="476" fill="#4c4c4c" />
    <g fill="none">
      {LINKS.map(({ d, s }) => (
        <g key={d}>
          <path d={d} stroke="#1c1c1c" strokeWidth="3.400" />
          <path d={d} stroke={s ?? "#858585"} strokeWidth="1.400" />
        </g>
      ))}
    </g>
    <g fontSize="15" fill="#f0f0f0">
      <text x="1014.500" y="743">[[0, 31, 62, 93, 124]]</text>
      <text x="1014.500" y="842">[[32, 63, 94, 125, 156]]</text>
    </g>
  </svg>
);

const NodeSpace = () => (
  <div className="relative h-[476px] w-[1440px] shrink-0 overflow-hidden">
    <Canvas />

    <Node title="" className="left-[198px] top-[-60px] h-[94px]">
      <div className="h-[24px] shrink-0" />
      <Input c="o">U. 1</Input>
      <Input c="o">V. 1</Input>
    </Node>

    <Node title="List Range Int" className="left-[224px] top-[149px] h-[152px]">
      <div className="h-[5px]" />
      <Output>Range. 1</Output>
      <Toggle a="Range" b="Count" on="b" className="mt-[4px] ml-[10px] h-[22px] w-[128px]" />
      <div className="relative mt-[6px] flex h-[21px] items-center pl-[11px]">
        <Socket c="g" />
        <IntField label="start:" value="0" className="h-[20px] w-[126px] rounded-full shadow-[0_1px_0_#777]" />
      </div>
      <div className="h-[1px]" />
      <Input>step. 1</Input>
      <Input>count. 1</Input>
    </Node>

    <Node title="Formula2" className="left-[448px] top-[282px] h-[152px]">
      <div className="h-[5px]" />
      <Output>Result. 1</Output>
      <div className="ml-[10px] mt-[4px] flex h-[22px] w-[127px] items-center rounded-[4px] border border-[#333] bg-gradient-to-b from-[#161616] to-[#2a2a2a] pl-[7px] pt-[2px] text-[#eee]">
        x+n[0]+1
      </div>
      <div className="h-[5px]" />
      <Input>X. 1</Input>
      <Input>n[0]. 1</Input>
      <Input>n[1]</Input>
    </Node>

    <Node title="List Slice" className="left-[669px] top-[135px] h-[174px]">
      <div className="h-[5px]" />
      <Output c="o">Slice. 5</Output>
      <Output c="o">Other</Output>
      <IntField label="level:" value="1" className="mt-[6px] ml-[10px] h-[20px] w-[127px] rounded-full shadow-[0_1px_0_#777]" />
      <div className="h-[5px]" />
      <Input>Data. 1</Input>
      <Input>Start. 1</Input>
      <Input>Stop. 1</Input>
    </Node>

    <Stetho className="left-[844px] top-[270px]" />
    <Stetho className="left-[844px] top-[370px]" />

    <Node title="UV Connect" selected className="left-[967px] top-[40px] h-[206px]">
      <div className="h-[4px]" />
      <Output c="o">vertices. 1</Output>
      <Output>data. 1</Output>
      <Toggle a="U_dir" b="V_dir" on="a" className="mt-[5px] ml-[10px] h-[22px] w-[128px]" />
      <div className="mt-[8px] flex h-[15px] items-center gap-[7px] pl-[13px] text-[#808080]">
        <Check />
        <span className="pt-[4px]">cycle</span>
      </div>
      <div className="mt-[12px] flex h-[15px] items-center pl-[13px] text-[#eee]">
        <Check on />
        <span className="w-[42px] pl-[7px] pt-[4px]">polygo</span>
        <span className="ml-[7px] flex items-center gap-[7px]">
          <Check on />
          <span className="pt-[4px]">slice</span>
        </span>
      </div>
      <div className="h-[8px]" />
      <Input c="o">vertices. 5</Input>
      <Input c="o">vertices 1</Input>
    </Node>

    <Node title="Viewer Draw2" className="left-[1242px] top-[33px] h-[194px]" body="bg-[#b23b0a]">
      <div className="mt-[5px] ml-[10px] flex gap-[1px] text-[#eee]">
        <div className="flex h-[21px] w-[86px] items-center rounded-[4px] border border-[#5a2a18] bg-[#636363] pl-[3px]">
          <EyeIcon />
          <span className="flex-1 pr-[4px] pt-[3px] text-center">Show</span>
        </div>
        <div className="flex h-[21px] w-[20px] items-center justify-center rounded-[4px] border border-[#5a2a18] bg-[#999]">
          <Sphere />
        </div>
        <div className="h-[21px] w-[20px] rounded-[4px] border border-[#5a2a18] bg-[#999]" />
      </div>
      <div className="mt-[5px] ml-[10px] grid h-[64px] w-[128px] grid-cols-[20px_1fr] grid-rows-3 gap-[1px] overflow-hidden rounded-[4px] border border-[#3c2012] bg-[#3c2012]">
        <span className="flex items-center justify-center bg-[#999]"><DrawCube kind="v" /></span>
        <span className="bg-[#476b3c]" />
        <span className="flex items-center justify-center bg-[#999]"><DrawCube kind="e" /></span>
        <span className="bg-[#dff2e7]" />
        <span className="flex items-center justify-center bg-[#636363]"><DrawCube kind="f" /></span>
        <span className="bg-[#ccffd6]" />
      </div>
      <div className="h-[6px]" />
      <Input c="o">vertices. 1</Input>
      <Input>edg_pol. 1</Input>
      <Input c="t">matrix. 1</Input>
    </Node>

    <div className="absolute left-[5px] top-[459px] flex h-[12px] w-[1413px] justify-end rounded-full bg-[#484848]">
      <div className="h-full w-[859px] rounded-full bg-gradient-to-b from-[#999] to-[#7f7f7f]" />
    </div>
    <div className="absolute left-[1424px] top-[5px] flex h-[448px] w-[11px] flex-col justify-end rounded-full bg-[#484848]">
      <div className="h-[118px] w-full rounded-full bg-gradient-to-r from-[#999] to-[#7f7f7f]" />
    </div>
    <div className="absolute left-0 top-[23px] flex h-[14px] w-[13px] items-center justify-center rounded-r-[4px] bg-[#2c2c2c]">
      <PlusTiny />
    </div>
  </div>
);

const SideTitle = ({ children, open, check }: Kids & { open?: boolean; check?: boolean }) => (
  <div className="flex h-[23px] shrink-0 items-center pl-[7px] pr-[6px]">
    <Tri open={open} className="text-[#2a2a2a]" />
    {check !== undefined && (
      <span className="ml-[3px] flex">
        <Check on={check} />
      </span>
    )}
    <span className={"flex-1 text-[12px] whitespace-nowrap text-[#101010] " + (check !== undefined ? "ml-[5px]" : "ml-[3px]")}>{children}</span>
    <Dots className="text-[#c4c4c4]" />
  </div>
);

const SideRule = () => <Rule className="bg-[#3c3c3c] shadow-[0_1px_0_#959595]" />;

const Sidebar = () => (
  <aside className="relative flex h-[476px] flex-1 overflow-hidden border-l border-[#8a8a8a] bg-[#727272] pl-[4px]">
    <div className="flex w-[213px] shrink-0 flex-col pt-[1px] [&>*]:shrink-0">
      <SideTitle check>Grease Pencil</SideTitle>
      <SideRule />
      <SideTitle>SV Groups Beta</SideTitle>
      <SideRule />
      <SideTitle>Node</SideTitle>
      <SideRule />
      <SideTitle check={false}>Color</SideTitle>
      <SideRule />
      <SideTitle open>Properties</SideTitle>
      <Toggle a="U_dir" b="V_dir" on="a" className="ml-[3px] mt-[8px] h-[21px] w-[207px]" />
      <div className="mt-[7px] flex h-[15px] items-center gap-[8px] pl-[5px] text-[#858585]">
        <Check />
        <span className="pt-[1px]">cycle</span>
      </div>
      <div className="mt-[10px] flex h-[15px] items-center pl-[5px] text-[#f2f2f2]">
        <Check on />
        <span className="w-[89px] pl-[8px] pt-[1px]">polygons</span>
        <Check on />
        <span className="pl-[8px] pt-[1px]">slice</span>
      </div>
      <div className="mt-[20px] h-[20px] pl-[10px] leading-[20px] text-[#0c0c0c]">Inputs:</div>
      <div className="mt-[5px] mb-[6px] h-[20px] pl-[10px] leading-[20px] text-[#0c0c0c]">vertices 1</div>
      <SideRule />
      <SideTitle>SV import/export</SideTitle>
      <SideRule />
      <SideTitle open>SV 0.5.0.7</SideTitle>
      <div className="ml-[3px] mt-[8px] flex h-[60px] w-[207px] overflow-hidden rounded-[5px] border border-[#333] bg-[#2b2b2b] pt-[2px] text-[#8f8f8f] shadow-[0_1px_0_#8a8a8a]">
        <div className="-mt-[2px] flex w-[68px] items-center justify-center border-r border-[#1d1d1d] pt-[2px]">Update all</div>
        <div className="flex flex-1 items-center justify-center whitespace-nowrap">Update Синус-перемещ...</div>
      </div>
      <div className="ml-[3px] mt-[5px] flex h-[73px] w-[207px] flex-col rounded-[5px] border border-[#333] bg-[#6a6a6a] pl-[4px] pt-[8px] text-[#0c0c0c] shadow-[0_1px_0_#8a8a8a]">
        <div className="flex h-[20px] items-center">
          <span className="w-[77px] pl-[8px]">Layout</span>
          <div className="grid w-[120px] grid-cols-5 place-items-center">
            <span>B</span>
            <EyeIcon />
            <CurveArrowIcon />
            <span>P</span>
            <span>F</span>
          </div>
        </div>
        <div className="flex h-[20px] items-center">
          <span className="flex h-[20px] w-[77px] items-center rounded-l-[4px] border border-r-0 border-[#222] bg-[#2b2b2b] pl-[3px] pt-[1px] whitespace-nowrap text-[#8f8f8f]">Синус-гене...</span>
          <Flags off className="w-[120px] rounded-l-none" />
        </div>
        <div className="flex h-[20px] items-center">
          <span className="w-[77px] pl-[8px] pt-[1px] whitespace-nowrap">Синус-пер...</span>
          <Flags off={false} className="w-[120px]" />
        </div>
      </div>
      <div className="ml-[3px] mt-[5px] flex h-[20px] w-[207px] items-center justify-center rounded-[5px] border border-[#222] bg-[#2b2b2b] pt-[2px] text-[#8f8f8f]">
        Check for new version
      </div>
    </div>
    <div className="ml-[5px] mt-[6px] h-[465px] w-[12px] shrink-0 rounded-full border border-[#5a5a5a] bg-[#555]">
      <div className="h-[447px] rounded-full bg-gradient-to-r from-[#999] to-[#808080]" />
    </div>
    <GripTR />
  </aside>
);

const NodeHeader = () => (
  <div className="relative flex h-[25px] shrink-0 items-center bg-[#727272] pl-[8px] pt-[1px] shadow-[inset_0_1px_0_#8a8a8a]">
    <Grip className="bottom-0 left-0" />
    <EditorType>
      <NodeTreeIcon />
    </EditorType>
    <Menu className="ml-[13px] w-[44px]">View</Menu>
    <Menu className="w-[51px]">Select</Menu>
    <Menu className="w-[39px]">Add</Menu>
    <Menu className="w-[39px]">Node</Menu>
    <div className={box + "w-[80px] overflow-hidden rounded-[4px] bg-[#2a2a2a]"}>
      <IconCell className="w-[19px]"><MaterialIcon /></IconCell>
      <IconCell className="w-[20px] border-l border-[#1c1c1c]"><CompositIcon /></IconCell>
      <IconCell className="w-[20px] border-l border-[#1c1c1c]"><CheckerIcon /></IconCell>
      <IconCell className="flex-1 border-l border-[#1c1c1c] bg-[#6489b3]"><SverchokIcon /></IconCell>
    </div>
    <DataBlock icon={<SverchokIcon />} name="Синус-перемещин..." className="ml-[5px] w-[231px]">
      <IconCell className="w-[20px] bg-[#3a3a3a] pt-[2px] text-[#9a9a9a]">2</IconCell>
      <IconCell className="w-[21px] border-x border-[#1c1c1c] bg-[#5d5d5d] pt-[2px] text-[#eee]">F</IconCell>
      <Plus />
      <Close />
    </DataBlock>
    <div className={box + "ml-[6px] w-[20px] justify-center rounded-[4px] bg-[#999]"}>
      <PinIcon />
    </div>
    <div className={box + "ml-[5px] w-[20px] justify-center rounded-[4px] border-[#4c4c4c] bg-[#5d5d5d]"}>
      <ParentIcon />
    </div>
    <div className={box + grad + "ml-[16px] w-[55px] overflow-hidden rounded-[4px]"}>
      <IconCell className="w-[19px] bg-[#999]"><MagnetIcon /></IconCell>
      <div className="flex h-full flex-1 items-center justify-between border-l border-[#262626] pl-[4px] pr-[3px]">
        <SnapGridIcon />
        <UpDown />
      </div>
    </div>
    <div className={box + "ml-[5px] w-[40px] justify-around rounded-[4px] bg-[#2a2a2a]"}>
      <PasteIcon />
      <PasteIcon out />
    </div>
  </div>
);

export default function App() {
  return (
    <div className="flex h-[973px] w-[1680px] flex-col overflow-hidden bg-[#393939] font-['DejaVu_Sans_Condensed','DejaVu_Sans',sans-serif] text-[11px] leading-[14px] [font-stretch:condensed]">
      <TopHeader />
      <div className="flex h-[445px] shrink-0">
        <TextEditor />
        <Viewport />
      </div>
      <div className="flex h-[476px] shrink-0">
        <NodeSpace />
        <Sidebar />
      </div>
      <NodeHeader />
    </div>
  );
}
